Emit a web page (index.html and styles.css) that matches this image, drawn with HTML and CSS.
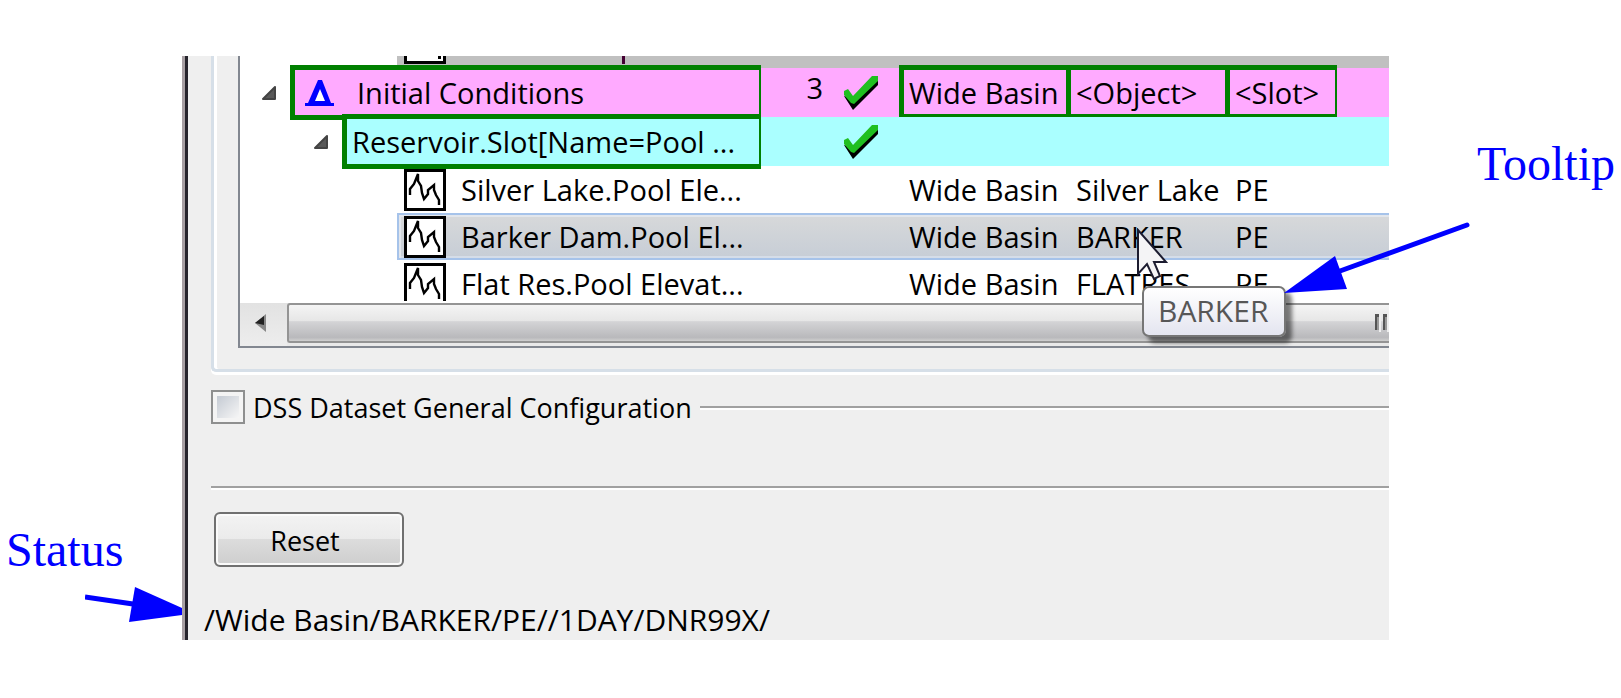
FILE: index.html
```html
<!DOCTYPE html>
<html lang="en">

<head>
    <meta charset="UTF-8">
    <meta name="viewport" content="width=device-width, initial-scale=1.0">
    <title>DSS Dataset Configuration</title>
    <link rel="stylesheet" href="styles.css">
</head>

<body>
    <!-- shared icons -->
    <svg class="defs" width="0" height="0">
        <symbol id="plot" viewBox="0 0 42 42">
            <rect x="1.5" y="1.5" width="39" height="39" fill="#fff" stroke="#000" stroke-width="3" />
            <path d="M6 26V20L10 15L14 5V12L17 17L18 24L20 30L24 25V21L30 16V21L32 26L35 31V36" fill="none" stroke="#000" stroke-width="2.4" />
        </symbol>
        <symbol id="check" viewBox="0 0 34 34">
            <path d="M0 20L9 34L34 9V3L28 3L9 22Z" fill="#000" />
            <path d="M0 15L4 13L9 20L28 0H34V5L10 28L7 27L0 19Z" fill="#20bf20" />
        </symbol>
        <symbol id="expanded" viewBox="0 0 16 16">
            <path d="M14 2V14H2Z" fill="#595959" stroke="#444" stroke-width="2" stroke-linejoin="round" />
        </symbol>
    </svg>

    <main class="figure">
        <aside class="callout callout-status">
            <span>Status</span>
            <svg class="status-arrow" width="97" height="38" viewBox="0 0 97 38">
                <path d="M0 11L48 18" stroke="#00f" stroke-width="5" />
                <path d="M50 1L97 22V29L44 36Z" fill="#00f" />
            </svg>
        </aside>

        <section class="window">
            <div class="group">
                <div class="tree">
                    <div class="viewport">
                        <table>
                            <colgroup>
                                <col class="col-name">
                                <col class="col-count">
                                <col class="col-check">
                                <col class="col-basin">
                                <col class="col-object">
                                <col class="col-slot">
                                <col>
                            </colgroup>
                            <tbody>
                                <tr class="row-cut">
                                    <td>
                                        <div class="strip">
                                            <svg width="230" height="12" viewBox="0 0 230 12">
                                                <path d="M7 0H49V8H7Z" />
                                                <path d="M10 0H46V5H10Z" fill="#fff" />
                                                <path d="M41 0H44V3H41Z" />
                                                <path d="M225 0H228V8H225Z" fill="#403" />
                                            </svg>
                                        </div>
                                    </td>
                                    <td></td>
                                    <td></td>
                                    <td></td>
                                    <td></td>
                                    <td></td>
                                    <td></td>
                                </tr>
                                <tr class="row-pink">
                                    <td>
                                        <div class="node level-1">
                                            <svg class="expander" width="16" height="16"><use href="#expanded" /></svg>
                                            <div class="box">
                                                <svg class="delta" width="30" height="26" viewBox="0 0 30 26">
                                                    <path d="M13 0H17L26 23H29V26H0V23H3Z" fill="#00f" />
                                                    <path d="M15 9L10 21H20Z" fill="#fff" />
                                                </svg>
                                                <span>Initial Conditions</span>
                                            </div>
                                        </div>
                                    </td>
                                    <td class="count">3</td>
                                    <td class="check"><svg width="34" height="34"><use href="#check" /></svg></td>
                                    <td class="marked">Wide Basin</td>
                                    <td class="marked">&lt;Object&gt;</td>
                                    <td class="marked last">&lt;Slot&gt;</td>
                                    <td></td>
                                </tr>
                                <tr class="row-cyan">
                                    <td>
                                        <div class="node level-2">
                                            <svg class="expander" width="16" height="16"><use href="#expanded" /></svg>
                                            <div class="box">Reservoir.Slot[Name=Pool ...</div>
                                        </div>
                                    </td>
                                    <td></td>
                                    <td class="check"><svg width="34" height="34"><use href="#check" /></svg></td>
                                    <td></td>
                                    <td></td>
                                    <td></td>
                                    <td></td>
                                </tr>
                                <tr class="row-leaf">
                                    <td>
                                        <div class="leaf"><svg width="42" height="42"><use href="#plot" /></svg>Silver Lake.Pool Ele...</div>
                                    </td>
                                    <td></td>
                                    <td></td>
                                    <td>Wide Basin</td>
                                    <td>Silver Lake</td>
                                    <td>PE</td>
                                    <td></td>
                                </tr>
                                <tr class="row-leaf selected">
                                    <td>
                                        <div class="leaf"><svg width="42" height="42"><use href="#plot" /></svg>Barker Dam.Pool El...</div>
                                    </td>
                                    <td></td>
                                    <td></td>
                                    <td>Wide Basin</td>
                                    <td>BARKER</td>
                                    <td>PE</td>
                                    <td></td>
                                </tr>
                                <tr class="row-leaf">
                                    <td>
                                        <div class="leaf"><svg width="42" height="42"><use href="#plot" /></svg>Flat Res.Pool Elevat...</div>
                                    </td>
                                    <td></td>
                                    <td></td>
                                    <td>Wide Basin</td>
                                    <td>FLATRES</td>
                                    <td>PE</td>
                                    <td></td>
                                </tr>
                            </tbody>
                        </table>
                    </div>
                    <div class="scrollbar">
                        <button class="scroll-left" aria-label="Scroll left">
                            <svg width="11" height="18" viewBox="0 0 11 18">
                                <path d="M11 0V18L0 9Z" fill="#888" />
                                <path d="M9 2V11L0 9Z" fill="#222" />
                            </svg>
                        </button>
                        <div class="thumb">
                            <svg width="14" height="18" viewBox="0 0 14 18">
                                <path d="M0 0H4V3H2V16H0ZM8 0H12V3H10V16H8Z" fill="#555" />
                                <path d="M2 3H4V16H2ZM10 3H12V16H10Z" fill="#999" />
                                <path d="M4 1H6V18H4ZM12 1H14V18H12Z" fill="#eee" />
                            </svg>
                        </div>
                    </div>
                </div>
            </div>

            <div class="config">
                <input type="checkbox" id="general_config">
                <label for="general_config">DSS Dataset General Configuration</label>
                <span class="rule"></span>
            </div>

            <hr>

            <button class="reset">Reset</button>
            <div class="statusbar">/Wide Basin/BARKER/PE//1DAY/DNR99X/</div>

            <svg class="cursor" width="32" height="54" viewBox="0 0 32 54">
                <path d="M1 2V46L10 36L17 51L23 48L17 34H29Z" fill="#f4f4f6" stroke="#1c1c30" stroke-width="2" />
            </svg>
            <div class="tooltip" role="tooltip">BARKER</div>
        </section>

        <aside class="callout callout-tooltip">
            <span>Tooltip</span>
            <svg class="tooltip-arrow" width="188" height="74" viewBox="0 0 188 74">
                <path d="M183 5L56 51" stroke="#00f" stroke-width="5" stroke-linecap="round" />
                <path d="M51 36L63 69L0 73Z" fill="#00f" />
            </svg>
        </aside>
    </main>
</body>

</html>
```
FILE: styles.css
```css
body {
    margin: 0;
    background: #fff;
    color: #000;
    font-family: "Open Sans", "Noto Sans", sans-serif;
    font-size: 29px;
    line-height: 40px;
}

.defs {
    position: absolute;
}

.figure {
    display: grid;
    grid-template-columns: 182px 1fr 232px;
    padding: 56px 0;
}

/* blue annotations */
.callout {
    position: relative;
    color: #00f;
    font-family: "Liberation Serif", serif;
    font-size: 48px;
    line-height: 56px;
}

.callout-status {
    padding: 466px 0 0 6px;
}

.callout-tooltip {
    padding: 80px 0 0 88px;
}

.status-arrow {
    position: absolute;
    top: 530px;
    right: 0;
}

.tooltip-arrow {
    position: absolute;
    top: 164px;
    left: -105px;
}

/* application window */
.window {
    position: relative;
    min-width: 0;
    background: #efefef;
    border-left: 3px solid #a8a0a4;
    box-shadow: inset 3px 0 #26242c;
}

.group {
    margin-left: 26px;
    padding: 0 0 21px 24px;
    border-left: 3px solid #d6dfe8;
    border-bottom: 3px solid #d6dfe8;
    border-bottom-left-radius: 5px;
    box-shadow: inset 3px 0 #fff, 0 3px #fff;
}

.tree {
    background: #fff;
    border-left: 2px solid #828790;
    border-bottom: 2px solid #828790;
}

.viewport {
    height: 245px;
    margin-bottom: 2px;
    overflow: hidden;
}

table {
    width: 100%;
    table-layout: fixed;
    border-collapse: collapse;
}

.col-name { width: 521px; }
.col-count { width: 68px; }
.col-check { width: 70px; }
.col-basin { width: 167px; }
.col-object { width: 159px; }
.col-slot { width: 112px; }

td {
    padding: 0 0 0 10px;
    white-space: nowrap;
}

td:first-child {
    padding: 0;
}

.row-cut td {
    height: 12px;
    background: #c0c0c0;
    line-height: 12px;
}

.row-cut td:first-child {
    background: none;
}

.strip {
    height: 12px;
    margin-left: 157px;
    background: #c0c0c0;
}

.strip svg {
    display: block;
}

.row-pink td {
    height: 49px;
    background: #faf;
}

.row-cyan td {
    height: 49px;
    background: #aff;
}

.row-pink td:first-child,
.row-cyan td:first-child {
    background: none;
}

.node {
    display: flex;
    align-items: center;
}

.level-1 {
    padding-left: 21px;
    gap: 13px;
}

.level-2 {
    padding-left: 73px;
    gap: 13px;
}

.box {
    display: flex;
    flex: 1;
    align-items: center;
    box-sizing: border-box;
    height: 55px;
    margin: -3px 0;
    border: solid #008000;
    border-width: 5px 2px 5px 5px;
    background: #faf;
}

.level-1 .box {
    gap: 22px;
    padding-left: 10px;
}

.level-2 .box {
    padding-left: 5px;
    background: #aff;
}

.row-pink .count {
    padding: 0 6px 6px 0;
    height: 43px;
    text-align: right;
    vertical-align: top;
}

.row-pink .check,
.row-cyan .check {
    padding-left: 15px;
}

.check svg {
    display: block;
}

.marked {
    box-shadow: 0 -3px #008000, inset 5px 2px #008000, inset 0 -3px #008000;
}

.marked.last {
    box-shadow: 0 -3px #008000, inset 5px 2px #008000, inset -2px -3px #008000;
}

.row-leaf td {
    height: 47px;
}

.leaf {
    display: flex;
    align-items: center;
    box-sizing: border-box;
    height: 47px;
    margin-left: 157px;
    padding-left: 7px;
    gap: 15px;
}

.selected td,
.selected .leaf {
    background: linear-gradient(#d8d9da, #c6cdd6);
    box-shadow: inset 0 2px #a6c3ea, inset 0 -2px #a6c3ea, inset 0 4px #e2e6ec, inset 0 -4px #d5dde8;
}

.selected td:first-child {
    background: none;
    box-shadow: none;
}

.selected .leaf {
    box-shadow: inset 2px 2px #a6c3ea, inset 0 -2px #a6c3ea, inset 4px 4px #e2e6ec, inset 0 -4px #d5dde8;
}

.scrollbar {
    display: flex;
    height: 43px;
    background: #e9e9e9;
}

.scroll-left {
    width: 47px;
    padding: 0 6px 4px 0;
    border: none;
    background: linear-gradient(#e2e2e2, #ededed);
    line-height: 0;
}

.thumb {
    display: flex;
    flex: 1;
    align-items: center;
    justify-content: flex-end;
    box-sizing: border-box;
    height: 40px;
    border: 2px solid #949494;
    border-right: none;
    border-radius: 3px 0 0 3px;
    background: linear-gradient(#f4f4f4, #e6e6e6 45%, #d4d4d6 46%, #b9b9bc 90%, #cfcfcf);
}

.config {
    display: flex;
    align-items: center;
    height: 34px;
    margin: 18px 0 62px 26px;
    font-size: 27px;
}

.config input {
    appearance: none;
    box-sizing: border-box;
    width: 34px;
    height: 34px;
    margin: 0 8px 0 0;
    border: 2px solid #8e8f8f;
    background: linear-gradient(135deg, #c4cad3, #f6f6f6) content-box, #f4f4f4;
    padding: 4px;
}

.config label {
    padding-top: 2px;
}

.rule {
    flex: 1;
    height: 2px;
    margin-left: 8px;
    background: #a0a0a0;
    box-shadow: 0 2px #fff;
}

hr {
    height: 2px;
    margin: 0 0 24px 26px;
    border: none;
    background: #a0a0a0;
    box-shadow: 0 2px #fff;
}

.reset {
    display: block;
    width: 190px;
    height: 55px;
    margin-left: 29px;
    padding: 2px 8px 0 0;
    border: 2px solid #707070;
    border-radius: 6px;
    background: linear-gradient(#f3f3f3, #ebebeb 48%, #dcdcdc 50%, #cecece);
    box-shadow: inset 0 0 0 2px #fafafa;
    color: #000;
    font-family: inherit;
    font-size: 27px;
}

.statusbar {
    height: 40px;
    margin: 33px 0 0 19px;
    font-size: 30px;
}

/* pointer and hover tip over the object column */
.cursor {
    position: absolute;
    top: 172px;
    left: 952px;
}

.tooltip {
    position: absolute;
    top: 230px;
    left: 957px;
    box-sizing: border-box;
    height: 51px;
    padding: 3px 16px 0 14px;
    border: 2px solid #767676;
    border-radius: 7px;
    background: linear-gradient(#fff, #e4e5f0);
    box-shadow: 6px 6px 4px rgba(0, 0, 0, 0.5);
    color: #575757;
    font-size: 30px;
}
```
